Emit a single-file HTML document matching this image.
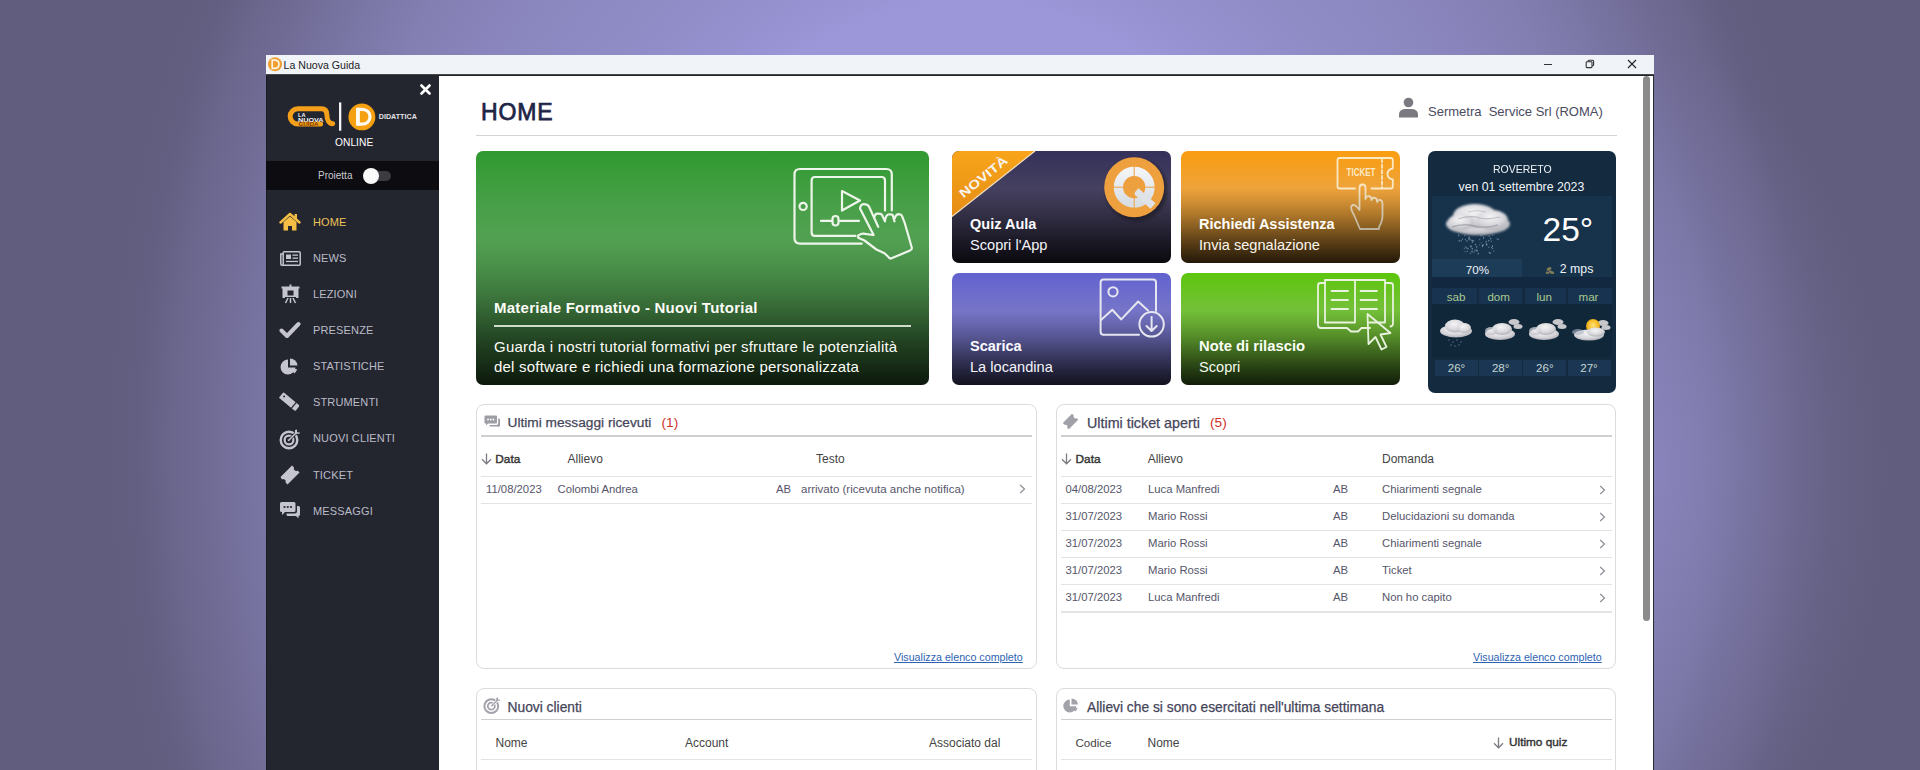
<!DOCTYPE html>
<html><head><meta charset="utf-8">
<style>
*{margin:0;padding:0;box-sizing:border-box}
html,body{width:1920px;height:770px;overflow:hidden}
body{position:relative;font-family:"Liberation Sans",sans-serif;
background:#615d7e;}
.bg{position:absolute;left:0;top:0;width:1920px;height:770px;
background:radial-gradient(ellipse 230px 420px at 1660px 470px,rgba(155,151,216,0.4) 0%,rgba(155,151,216,0.18) 50%,rgba(155,151,216,0) 100%),radial-gradient(ellipse 866px 1073px at 970px 450px,#9b97d8 0%,#9b97d8 41.7%,#9591cf 47.2%,#8f8bc5 55.1%,#8985bc 67.7%,#837fb2 74.8%,#7a76a5 81.1%,#75719d 85%,#6f6b94 88.2%,#6a668c 92.1%,#635f82 96.1%,#615d7e 100%);}
.a{position:absolute}
.win{position:absolute;left:266px;top:55px;width:1388px;height:715px;background:#fff}
.title{position:absolute;left:266px;top:55px;width:1388px;height:19px;background:#f0f3f8}
.tline{position:absolute;left:266px;top:74px;width:1388px;height:2px;background:linear-gradient(180deg,#58585c 0%,#141418 100%)}
.side{position:absolute;left:266px;top:75px;width:173px;height:695px;background:#23252f}
.main{position:absolute;left:439px;top:75px;width:1214px;height:695px;background:#fff}
.rb{position:absolute;left:1653px;top:75px;width:1px;height:695px;background:#2a2a33}
.lb{position:absolute;left:266px;top:75px;width:1px;height:695px;background:#1b1c24}
.menu{position:absolute;left:313px;font-size:11px;color:#babcc8;letter-spacing:0.15px;line-height:11px}
.card{position:absolute;border-radius:7px;overflow:hidden;color:#fff}
.t{position:absolute;line-height:1;white-space:nowrap}
.panel{position:absolute;border:1px solid #dcdcdc;border-radius:8px;background:#fff}
</style></head>
<body>
<div class="bg"></div>
<div class="win"></div>
<div class="title"></div>
<div class="side"></div>
<div class="lb"></div>
<div class="main"></div>
<div class="rb"></div>
<div class="tline"></div>

<!-- title bar -->
<svg class="a" style="left:267px;top:56px" width="17" height="17" viewBox="0 0 17 17"><circle cx="8" cy="8.3" r="7" fill="#f0a030"/><path d="M5.2 4.2 H7.5 Q12 4.2 12 8.3 Q12 12.4 7.5 12.4 H5.2Z" fill="none" stroke="#fdf3e0" stroke-width="1.7"/><path d="M7 6.3 L10 8.3 L7 10.3Z" fill="#f0a030"/></svg>
<div class="t" style="left:283.5px;top:60px;font-size:10.6px;color:#1c1c1c">La Nuova Guida</div>
<div class="a" style="left:1544px;top:63.5px;width:8px;height:1.2px;background:#333"></div>
<svg class="a" style="left:1585px;top:59px" width="10" height="10" viewBox="0 0 10 10"><rect x="1.2" y="2.8" width="5.8" height="5.8" rx="0.8" fill="none" stroke="#333" stroke-width="1.1"/><path d="M3 2.6 V2.2 Q3 1.2 4 1.2 H7.6 Q8.6 1.2 8.6 2.2 V5.8 Q8.6 6.8 7.6 6.8 H7.2" fill="none" stroke="#333" stroke-width="1.1"/></svg>
<svg class="a" style="left:1627px;top:59px" width="10" height="10" viewBox="0 0 10 10"><path d="M1 1 L9 9 M9 1 L1 9" stroke="#222" stroke-width="1.1"/></svg>

<!-- sidebar -->
<svg class="a" style="left:420px;top:84px" width="11" height="11" viewBox="0 0 11 11"><path d="M1.5 1.5L9.5 9.5M9.5 1.5L1.5 9.5" stroke="#fff" stroke-width="2.6" stroke-linecap="round"/></svg>
<svg class="a" style="left:286px;top:101px" width="134" height="32" viewBox="0 0 134 32">
 <path d="M34.6 23 H11.8 A7.65 7.65 0 0 1 11.8 7.7 H35.5 C39.5 7.7 40.9 10 40.9 14 C40.9 19 43 22.5 46.7 22.7" fill="none" stroke="#f5a01a" stroke-width="5" stroke-linecap="round" stroke-linejoin="round"/>
 <text x="12" y="16.3" font-family="Liberation Sans" font-weight="bold" font-size="5.6" fill="#f4f4f6">LA</text>
 <text x="12" y="20.6" font-family="Liberation Sans" font-weight="bold" font-size="5.6" fill="#f4f4f6" textLength="25.5" lengthAdjust="spacingAndGlyphs">NUOVA</text>
 <text x="12.5" y="25" font-family="Liberation Sans" font-weight="bold" font-size="4.6" fill="#7a3800" textLength="20" lengthAdjust="spacingAndGlyphs">GUIDA</text>
 <rect x="53" y="1.4" width="2.3" height="28.3" fill="#f4f4f6"/>
 <circle cx="75.9" cy="15.9" r="13.45" fill="#f5a010"/>
 <path d="M71.95 8.3 H75.5 C81 8.3 84 11.5 84 15.7 C84 20 81 23.1 75.5 23.1 H71.95 Z" fill="none" stroke="#fdfaf2" stroke-width="3.2" stroke-linejoin="round"/>
 <rect x="70.1" y="6.8" width="3.6" height="17.8" fill="#fdfaf2"/>
 <text x="92.8" y="17.9" font-family="Liberation Sans" font-weight="bold" font-size="7.6" fill="#e2e2e8" textLength="38" lengthAdjust="spacingAndGlyphs">DIDATTICA</text>
</svg>
<div class="t" style="left:335px;top:137.5px;font-size:10.2px;color:#fff;letter-spacing:0.05px">ONLINE</div>
<div class="a" style="left:266px;top:161px;width:173px;height:29px;background:#0c0c11"></div>
<div class="a" style="left:318px;top:171px;font-size:10px;line-height:10px;color:#c9c9cf">Proietta</div>
<div class="a" style="left:364px;top:171px;width:27px;height:9.5px;border-radius:5px;background:#3b3b40"></div>
<div class="a" style="left:363px;top:168px;width:16px;height:16px;border-radius:8px;background:#fafafa"></div>

<svg class="a" style="left:279px;top:212px" width="22" height="20" viewBox="0 0 22 20"><path d="M1.5 10.5 L11 2 L20.5 10.5" fill="none" stroke="#f5bf45" stroke-width="2.4" stroke-linecap="round" stroke-linejoin="round"/><path d="M15.5 2 h2.5 v5 l-2.5 -2z" fill="#f5bf45"/><path d="M4.5 10 L11 4.5 L17.5 10 V18.5 H13 V14 H9 V18.5 H4.5Z" fill="#f5bf45"/></svg>
<div class="menu" style="top:217px;color:#eec35a">HOME</div>

<svg class="a" style="left:280px;top:251px" width="21" height="15" viewBox="0 0 21 15"><rect x="3.2" y="0.8" width="17" height="13.4" rx="1" fill="none" stroke="#c4c5ce" stroke-width="1.5"/><path d="M3.2 3 H0.8 V13 Q0.8 14.2 2 14.2 H4" fill="none" stroke="#c4c5ce" stroke-width="1.5"/><rect x="6" y="3.5" width="5" height="4.5" fill="#c4c5ce"/><rect x="12.5" y="3.5" width="5.5" height="1.3" fill="#c4c5ce"/><rect x="12.5" y="6.5" width="5.5" height="1.3" fill="#c4c5ce"/><rect x="6" y="9.8" width="12" height="1.3" fill="#c4c5ce"/></svg>
<div class="menu" style="top:253px">NEWS</div>

<svg class="a" style="left:281px;top:284px" width="19" height="20" viewBox="0 0 19 20"><rect x="0.5" y="2.5" width="18" height="2" fill="#c4c5ce"/><rect x="8.5" y="0.5" width="2" height="3" fill="#c4c5ce"/><path d="M1.5 4 H17.5 V14 H1.5Z" fill="#c4c5ce"/><rect x="6.5" y="6.5" width="6" height="5" fill="#23252f"/><rect x="4" y="13" width="11" height="1.5" fill="#23252f"/><path d="M9.5 14 V19 M7 14 L4.5 19 M12 14 L14.5 19" stroke="#c4c5ce" stroke-width="1.5"/></svg>
<div class="menu" style="top:289px">LEZIONI</div>

<svg class="a" style="left:279px;top:321px" width="22" height="18" viewBox="0 0 22 18"><path d="M2.5 9.5 L8 15 L19.5 3" fill="none" stroke="#c4c5ce" stroke-width="4" stroke-linecap="round" stroke-linejoin="round"/></svg>
<div class="menu" style="top:325px">PRESENZE</div>

<svg class="a" style="left:280px;top:358px" width="19" height="18" viewBox="0 0 19 18"><path d="M8 1.5 A7.5 7.5 0 1 0 15.5 9.5 H8Z" fill="#c4c5ce"/><path d="M10 0.5 A7.5 7.5 0 0 1 17.5 7.5 H10Z" fill="#c4c5ce"/><path d="M10.2 11 H17 A7 7 0 0 1 14.5 15.5Z" fill="#c4c5ce"/></svg>
<div class="menu" style="top:361px">STATISTICHE</div>

<svg class="a" style="left:279px;top:392px" width="22" height="20" viewBox="0 0 22 20"><g transform="translate(10.3 9.7) rotate(39.5)"><path d="M-10.6 -2.6 Q-10.6 -3.6 -9.6 -3.6 H5.2 V3.6 H-9.6 Q-10.6 3.6 -10.6 2.6Z" fill="#c4c5ce"/><path d="M6.4 -3.6 H9.2 Q10.6 -3.6 10.6 -2.2 V2.2 Q10.6 3.6 9.2 3.6 H6.4Z" fill="#c4c5ce"/><circle cx="-7.3" cy="-0.8" r="1" fill="#23252f"/></g></svg>
<div class="menu" style="top:397px">STRUMENTI</div>

<svg class="a" style="left:279px;top:429px" width="22" height="21" viewBox="0 0 22 21"><circle cx="10" cy="11" r="8.3" fill="none" stroke="#c4c5ce" stroke-width="2.4"/><circle cx="10" cy="11" r="4.4" fill="none" stroke="#c4c5ce" stroke-width="2.2"/><circle cx="10" cy="11" r="1.3" fill="#c4c5ce"/><path d="M10 11 L18 3" stroke="#23252f" stroke-width="3"/><path d="M10 11 L18 3" stroke="#c4c5ce" stroke-width="1.6"/><path d="M16 1 L16 4.8 L20.5 4.8 L21 3.5 L18 3.3 L18 0.5Z" fill="#c4c5ce"/></svg>
<div class="menu" style="top:433px">NUOVI CLIENTI</div>

<svg class="a" style="left:279px;top:464px" width="22" height="22" viewBox="0 0 22 22"><path d="M13 1.5 L15 3.5 Q14 5.5 16 6.5 Q17.5 7.5 18.5 6.5 L20.5 8.5 L8.5 20.5 L6.5 18.5 Q7.5 16.5 5.5 15.5 Q4 14.5 3 15.5 L1.5 13Z" fill="#c4c5ce"/></svg>
<div class="menu" style="top:470px">TICKET</div>

<svg class="a" style="left:279px;top:501px" width="22" height="19" viewBox="0 0 22 19"><path d="M2.5 1 H15 Q16.5 1 16.5 2.5 V9.5 Q16.5 11 15 11 H6 L3 14 V11 H2.5 Q1 11 1 9.5 V2.5 Q1 1 2.5 1Z" fill="#c4c5ce"/><circle cx="5.5" cy="6" r="1.1" fill="#23252f"/><circle cx="8.8" cy="6" r="1.1" fill="#23252f"/><circle cx="12" cy="6" r="1.1" fill="#23252f"/><path d="M18 5 H19.5 Q21 5 21 6.5 V13.5 Q21 15 19.5 15 V17.5 L17 15 H9 Q7.5 15 7.5 13.5 V12.5 H15.5 Q18 12.5 18 10Z" fill="#c4c5ce"/></svg>
<div class="menu" style="top:506px">MESSAGGI</div>

<!-- header -->
<div class="t" style="left:481px;top:100.5px;font-size:23px;color:#1f2547;letter-spacing:0.9px;-webkit-text-stroke:0.75px #1f2547">HOME</div>
<div class="a" style="left:476px;top:135px;width:1141px;height:1px;background:#d4d4d4"></div>
<svg class="a" style="left:1398px;top:97px" width="22" height="21" viewBox="0 0 22 21"><circle cx="10.5" cy="5.5" r="4.8" fill="#7a7a80"/><path d="M1 20.5 V17.5 Q1 12.5 7 12 H14 Q20 12.5 20 17.5 V20.5Z" fill="#7a7a80"/></svg>
<div class="a" style="left:1428px;top:105px;font-size:13px;color:#4a4a60;line-height:13px">Sermetra&nbsp; Service Srl (ROMA)</div>

<!-- cards -->
<div class="card" style="left:476px;top:151px;width:453px;height:234px;background:linear-gradient(180deg,rgba(0,0,0,0) 0%,rgba(0,0,0,0) 38%,rgba(0,0,0,0.1) 49%,rgba(0,0,0,0.25) 61%,rgba(0,0,0,0.58) 81%,rgba(0,0,0,0.85) 100%),linear-gradient(180deg,#2f992f 0%,#47a047 22%,#52a052 38%)">
 <svg class="a" style="left:309px;top:9px" width="140" height="105" viewBox="0 0 140 105" fill="none" stroke="#eef5ea" stroke-width="2.2" stroke-linecap="round" stroke-linejoin="round">
  <path d="M76.8 83.6 H15 Q9.5 83.6 9.5 78.1 V14.5 Q9.5 9 15 9 H101.3 Q106.8 9 106.8 14.5 V50.5"/>
  <path d="M70.5 75.9 H30 Q26.6 75.9 26.6 72.5 V20.4 Q26.6 17 30 17 H96.6 Q100 17 100 20.4 V50.5"/>
  <circle cx="18.1" cy="46.4" r="3.6"/>
  <path d="M57 31 L75 40.5 L57 50.5Z"/>
  <path d="M36 60.9 H46.5 M55 60.9 H74"/>
  <rect x="47.5" y="56" width="6" height="9.5" rx="3"/>
  <path d="M88.6 75 L75 48.6 Q75.5 44.5 78.6 44.1 Q82.5 44 84.1 46.8 L93.2 66.8 M89.5 56.8 Q90 53.8 92.3 53.6 Q95.8 53.5 96.8 54.5 L100 61.4 M100 60.5 Q101 55 103.2 54.5 Q106.5 54 107.7 55 L109.5 61.4 M109.5 58.6 Q111 54.3 113.2 54.1 Q116 54.2 116.8 55.5 L119.5 62.3 L124 77.7 L126.8 87.7 Q127 90 125 90.5 L105.9 98.6 Q104 98.5 103.2 96.8 L99.5 93.2 L91.4 89.5 L79.5 80.5 L73.2 77.7 Q72.5 75.5 74.1 75 Q76 73.5 78.6 73.6 L87.7 75"/>
 </svg>
 <div class="a" style="left:18px;top:149px;font-size:15px;font-weight:bold;line-height:15px;letter-spacing:0.25px;color:#fdfdf8">Materiale Formativo - Nuovi Tutorial</div>
 <div class="a" style="left:18px;top:174px;width:417px;height:1.6px;background:#cfdccb"></div>
 <div class="a" style="left:18px;top:186px;font-size:15px;line-height:20.4px;letter-spacing:0.22px;color:#fdfdf8">Guarda i nostri tutorial formativi per sfruttare le potenzialità<br>del software e richiedi una formazione personalizzata</div>
</div>

<div class="card" style="left:952px;top:151px;width:219px;height:112px;background:linear-gradient(180deg,rgba(0,0,0,0) 0%,rgba(0,0,0,0) 33%,rgba(0,0,0,0.12) 45%,rgba(0,0,0,0.27) 57%,rgba(0,0,0,0.6) 80%,rgba(0,0,0,0.85) 100%),linear-gradient(180deg,#33305a 0%,#45405f 33%)">
 <svg class="a" style="left:0;top:0" width="219" height="112"><defs><linearGradient id="rib" x1="0" y1="0" x2="0" y2="1"><stop offset="0" stop-color="#f9a51a"/><stop offset="1" stop-color="#e48c16"/></linearGradient></defs><path d="M0 0 H83 L0 65.5Z" fill="url(#rib)"/><path d="M83 0 L0 65.5" stroke="#f3e2c2" stroke-width="1.2"/>
 <text x="0" y="0" transform="translate(11.5 47.5) rotate(-38.8)" font-family="Liberation Sans" font-weight="bold" font-size="12.5" fill="#f7f3ee" textLength="58" lengthAdjust="spacingAndGlyphs">NOVITÀ</text>
 <defs><filter id="qsh" x="-30%" y="-30%" width="160%" height="160%"><feGaussianBlur stdDeviation="1.6"/></filter><linearGradient id="qw" x1="0" y1="0" x2="0" y2="1"><stop offset="0" stop-color="#f2f4f6"/><stop offset="1" stop-color="#d9dee3"/></linearGradient></defs>
 <circle cx="184.5" cy="39" r="31" fill="#15121f" opacity="0.55" filter="url(#qsh)"/>
 <circle cx="182.2" cy="36.2" r="30" fill="#eea03e"/>
 <circle cx="182.2" cy="36.2" r="15.8" fill="none" stroke="url(#qw)" stroke-width="9.3"/>
 <path d="M186.5 37.2 L203.5 52.2 L198.5 57.8 L181.5 42.8Z" fill="#dfe3e8"/>
 <path d="M182.2 15.5 V57 M161.5 36.2 H203" stroke="#eda040" stroke-width="1"/>
 </svg>
 <div class="a" style="left:18px;top:66px;font-size:14.5px;font-weight:bold;line-height:15px;color:#fbfbff">Quiz Aula</div>
 <div class="a" style="left:18px;top:87px;font-size:14.6px;line-height:15px;color:#f4f4fa">Scopri l'App</div>
</div>

<div class="card" style="left:1181px;top:151px;width:219px;height:112px;background:linear-gradient(180deg,rgba(0,0,0,0) 0%,rgba(0,0,0,0) 33%,rgba(0,0,0,0.12) 45%,rgba(0,0,0,0.27) 57%,rgba(0,0,0,0.6) 80%,rgba(0,0,0,0.85) 100%),linear-gradient(180deg,#fa9d10 0%,#eea33a 33%)">
 <svg class="a" style="left:149px;top:2px" width="70" height="80" viewBox="0 0 70 80" fill="none" stroke="#fbe8c4" stroke-width="1.8" stroke-linecap="round" stroke-linejoin="round"><defs><linearGradient id="hg" gradientUnits="userSpaceOnUse" x1="0" y1="30" x2="0" y2="78"><stop offset="0" stop-color="#fbe8c4"/><stop offset="1" stop-color="#b9ae9c"/></linearGradient></defs>
  <path d="M25 35.5 H9.5 Q7.5 35.5 7.5 33.5 V7 Q7.5 5 9.5 5 H60.8 Q62.8 5 62.8 7 V15.5 Q57.5 16.5 57.5 21 Q57.5 25.5 62.8 26.5 V33.5 Q62.8 35.5 60.8 35.5 H41.5"/>
  <path d="M52 6 V35" stroke-dasharray="3.2 2.4"/>
  <path stroke="url(#hg)" d="M30 76 L24 62 Q20 55 21.5 53 Q23 51 26 53 L29.5 57 V35 Q29.5 31.5 32.5 31.5 Q35.5 31.5 35.5 35 V46 Q36 43 39 43.2 Q41.5 43.5 41.5 47 Q42 44.5 44.8 44.8 Q47.2 45.2 47.2 49 Q48 46.5 50.5 47 Q52.5 47.5 52.5 51 V63 Q52.5 68 49 74 V76Z"/>
  <text x="16.5" y="23.3" font-family="Liberation Sans" font-weight="bold" font-size="10" stroke="none" fill="#fbe8c4" textLength="29" lengthAdjust="spacingAndGlyphs">TICKET</text>
 </svg>
 <div class="a" style="left:18px;top:66px;font-size:14.5px;font-weight:bold;line-height:15px;color:#fffdf6">Richiedi Assistenza</div>
 <div class="a" style="left:18px;top:87px;font-size:14.6px;line-height:15px;color:#fbf6ee">Invia segnalazione</div>
</div>

<div class="card" style="left:952px;top:273px;width:219px;height:112px;background:linear-gradient(180deg,rgba(0,0,0,0) 0%,rgba(0,0,0,0) 33%,rgba(0,0,0,0.12) 45%,rgba(0,0,0,0.27) 57%,rgba(0,0,0,0.6) 80%,rgba(0,0,0,0.85) 100%),linear-gradient(180deg,#6262cf 0%,#7675c9 33%)">
 <svg class="a" style="left:140px;top:0px" width="79" height="80" viewBox="0 0 79 80" fill="none" stroke="#e6e6f0" stroke-width="2" stroke-linecap="round" stroke-linejoin="round">
  <path d="M47 61.8 H11.6 Q8.6 61.8 8.6 58.8 V9.6 Q8.6 6.6 11.6 6.6 H61 Q64 6.6 64 9.6 V38"/>
  <circle cx="21" cy="18.8" r="4.6"/>
  <path d="M9 47 L20.3 36.7 L29.2 46.4 L46.2 28.5 L56 37.5"/>
  <circle cx="59.6" cy="51.3" r="12.2"/>
  <path d="M59.6 44 V57.5 M54.5 53 L59.6 58 L64.7 53"/>
 </svg>
 <div class="a" style="left:18px;top:66px;font-size:14.5px;font-weight:bold;line-height:15px;color:#fbfbff">Scarica</div>
 <div class="a" style="left:18px;top:87px;font-size:14.6px;line-height:15px;color:#f4f4fa">La locandina</div>
</div>

<div class="card" style="left:1181px;top:273px;width:219px;height:112px;background:linear-gradient(180deg,rgba(0,0,0,0) 0%,rgba(0,0,0,0) 33%,rgba(0,0,0,0.12) 45%,rgba(0,0,0,0.27) 57%,rgba(0,0,0,0.6) 80%,rgba(0,0,0,0.85) 100%),linear-gradient(180deg,#5ec60e 0%,#74c038 33%)">
 <svg class="a" style="left:130px;top:2px" width="89" height="80" viewBox="0 0 89 80" fill="none" stroke="#e8f2de" stroke-width="1.8" stroke-linecap="round" stroke-linejoin="round">
  <path d="M14 8 H9.5 Q7 8 7 10.5 V50 Q7 53 10 53 H36 L40 56.5 H47 L50.5 53 H59"/>
  <path d="M75 8 H79.5 Q82 8 82 10.5 V48.5 Q82 51 79.5 51.5"/>
  <path d="M14 5 H44 V47.5 H14Z"/>
  <path d="M44 5 H74 V47.5 H58"/>
  <path d="M20.5 16 H37 M20.5 25 H37 M20.5 34 H37 M49.5 16 H66 M49.5 25 H66 M49.5 34 H66"/>
  <path d="M56.5 39 L79.5 58 L69.5 59.5 L75.5 72 L70.5 74.5 L64.5 62 L57.5 69Z"/>
 </svg>
 <div class="a" style="left:18px;top:66px;font-size:14.8px;font-weight:bold;line-height:15px;color:#fbfff6">Note di rilascio</div>
 <div class="a" style="left:18px;top:87px;font-size:14.6px;line-height:15px;color:#f4faee">Scopri</div>
</div>

<div class="card" style="left:1428px;top:151px;width:188px;height:242px;background:#132a3f">
 <div class="a" style="left:4px;top:45px;width:180px;height:82px;background:#17334c"></div>
 <div class="a" style="left:4px;top:108px;width:90px;height:19px;background:#1d3c57"></div>
 <div class="a" style="left:4px;top:126px;width:180px;height:10px;background:#112840"></div>
 <div class="a" style="left:4px;top:136.5px;width:45px;height:16.5px;background:#173350"></div>
 <div class="a" style="left:51px;top:136.5px;width:43px;height:16.5px;background:#173350"></div>
 <div class="a" style="left:97px;top:136.5px;width:41px;height:16.5px;background:#173350"></div>
 <div class="a" style="left:140px;top:136.5px;width:44px;height:16.5px;background:#173350"></div>
 <div class="a" style="left:4px;top:153px;width:180px;height:53px;background:#102639"></div>
 <div class="a" style="left:6.5px;top:209px;width:43px;height:16px;background:#1b3652"></div>
 <div class="a" style="left:51px;top:209px;width:43px;height:16px;background:#1b3652"></div>
 <div class="a" style="left:95px;top:209px;width:43px;height:16px;background:#1b3652"></div>
 <div class="a" style="left:139.5px;top:209px;width:43px;height:16px;background:#1b3652"></div>
 <svg class="a" style="left:0;top:0" width="188" height="242" viewBox="0 0 188 242">
  <defs>
   <filter id="bl" x="-20%" y="-20%" width="140%" height="140%"><feGaussianBlur stdDeviation="1.1"/></filter>
   <filter id="bl2" x="-20%" y="-20%" width="140%" height="140%"><feGaussianBlur stdDeviation="0.6"/></filter>
   <radialGradient id="cg" cx="45%" cy="35%" r="70%"><stop offset="0" stop-color="#f4f4f6"/><stop offset="0.6" stop-color="#d8d8dc"/><stop offset="1" stop-color="#a8a8b0"/></radialGradient>
   <radialGradient id="sun" cx="50%" cy="45%" r="55%"><stop offset="0" stop-color="#ffe27a"/><stop offset="0.7" stop-color="#f5b922"/><stop offset="1" stop-color="#d99010"/></radialGradient>
  </defs>
  <g filter="url(#bl)">
   <ellipse cx="50" cy="73" rx="32" ry="11" fill="url(#cg)"/>
   <ellipse cx="47" cy="65" rx="22" ry="12" fill="url(#cg)"/>
   <ellipse cx="64" cy="69" rx="16" ry="10" fill="url(#cg)"/>
   <ellipse cx="33" cy="71" rx="13" ry="8" fill="url(#cg)"/>
  </g>
  <g filter="url(#bl2)" opacity="0.55">
   <path d="M24 76 Q36 72 46 75 Q56 78 70 74" stroke="#8e8e98" stroke-width="1.6" fill="none"/>
   <path d="M30 68 Q42 64 52 67 Q60 69 72 66" stroke="#9a9aa4" stroke-width="1.2" fill="none"/>
   <path d="M40 61 Q50 58 58 61" stroke="#a8a8b0" stroke-width="1" fill="none"/>
  </g>
  <g fill="#9ab8d2" opacity="0.75"><ellipse cx="51.8" cy="88.5" rx="0.45" ry="0.73"/><ellipse cx="54.5" cy="95.5" rx="0.38" ry="0.61"/><ellipse cx="64.8" cy="84.3" rx="0.42" ry="0.69"/><ellipse cx="70.3" cy="88.5" rx="0.47" ry="0.77"/><ellipse cx="49.2" cy="99.9" rx="0.51" ry="0.83"/><ellipse cx="55.7" cy="86.9" rx="0.57" ry="0.92"/><ellipse cx="58.9" cy="93.9" rx="0.52" ry="0.85"/><ellipse cx="61.1" cy="85.2" rx="0.50" ry="0.82"/><ellipse cx="31.2" cy="89.7" rx="0.57" ry="0.92"/><ellipse cx="58.3" cy="93.0" rx="0.57" ry="0.93"/><ellipse cx="64.5" cy="97.6" rx="0.45" ry="0.74"/><ellipse cx="48.2" cy="99.2" rx="0.58" ry="0.95"/><ellipse cx="37.0" cy="100.7" rx="0.39" ry="0.64"/><ellipse cx="69.1" cy="88.1" rx="0.46" ry="0.76"/><ellipse cx="42.9" cy="95.9" rx="0.48" ry="0.78"/><ellipse cx="44.2" cy="91.3" rx="0.50" ry="0.81"/><ellipse cx="64.6" cy="95.1" rx="0.52" ry="0.85"/><ellipse cx="61.3" cy="101.6" rx="0.60" ry="0.97"/><ellipse cx="38.2" cy="96.8" rx="0.57" ry="0.92"/><ellipse cx="62.6" cy="102.3" rx="0.50" ry="0.81"/><ellipse cx="40.0" cy="97.6" rx="0.56" ry="0.91"/><ellipse cx="42.2" cy="94.9" rx="0.38" ry="0.61"/><ellipse cx="66.0" cy="100.2" rx="0.38" ry="0.62"/><ellipse cx="47.0" cy="99.2" rx="0.40" ry="0.64"/><ellipse cx="60.8" cy="89.6" rx="0.57" ry="0.93"/><ellipse cx="55.0" cy="84.8" rx="0.37" ry="0.60"/><ellipse cx="44.2" cy="97.7" rx="0.57" ry="0.93"/><ellipse cx="50.2" cy="102.6" rx="0.60" ry="0.97"/><ellipse cx="33.1" cy="89.9" rx="0.50" ry="0.82"/><ellipse cx="36.8" cy="84.6" rx="0.46" ry="0.74"/><ellipse cx="37.7" cy="95.6" rx="0.37" ry="0.60"/><ellipse cx="44.0" cy="100.5" rx="0.59" ry="0.96"/><ellipse cx="46.1" cy="101.0" rx="0.47" ry="0.76"/><ellipse cx="55.3" cy="93.9" rx="0.50" ry="0.82"/><ellipse cx="54.4" cy="94.6" rx="0.59" ry="0.95"/><ellipse cx="47.4" cy="93.6" rx="0.53" ry="0.87"/><ellipse cx="41.9" cy="88.5" rx="0.59" ry="0.97"/><ellipse cx="51.8" cy="93.9" rx="0.36" ry="0.59"/><ellipse cx="53.1" cy="91.9" rx="0.36" ry="0.59"/><ellipse cx="54.7" cy="95.7" rx="0.37" ry="0.61"/><ellipse cx="48.8" cy="95.9" rx="0.52" ry="0.85"/><ellipse cx="58.1" cy="90.7" rx="0.54" ry="0.87"/><ellipse cx="30.8" cy="84.4" rx="0.52" ry="0.85"/><ellipse cx="42.2" cy="102.3" rx="0.47" ry="0.76"/><ellipse cx="43.5" cy="95.3" rx="0.45" ry="0.73"/><ellipse cx="44.8" cy="89.9" rx="0.50" ry="0.82"/><ellipse cx="45.1" cy="89.7" rx="0.55" ry="0.89"/><ellipse cx="53.0" cy="84.5" rx="0.54" ry="0.87"/><ellipse cx="38.9" cy="89.9" rx="0.55" ry="0.90"/><ellipse cx="37.2" cy="88.5" rx="0.46" ry="0.75"/><ellipse cx="36.2" cy="97.3" rx="0.44" ry="0.71"/><ellipse cx="63.2" cy="90.3" rx="0.47" ry="0.76"/><ellipse cx="39.2" cy="100.3" rx="0.44" ry="0.72"/><ellipse cx="63.6" cy="96.4" rx="0.47" ry="0.76"/><ellipse cx="34.5" cy="88.3" rx="0.49" ry="0.79"/><ellipse cx="62.7" cy="87.6" rx="0.56" ry="0.91"/><ellipse cx="40.8" cy="87.5" rx="0.55" ry="0.90"/><ellipse cx="60.9" cy="96.2" rx="0.44" ry="0.72"/><ellipse cx="41.2" cy="86.5" rx="0.55" ry="0.89"/><ellipse cx="43.8" cy="89.2" rx="0.46" ry="0.75"/></g>
  <g filter="url(#bl2)">
   <ellipse cx="28" cy="180" rx="16" ry="6.5" fill="url(#cg)"/>
   <ellipse cx="27" cy="175" rx="10" ry="6.5" fill="url(#cg)"/>
   <ellipse cx="36" cy="177" rx="7" ry="5" fill="url(#cg)"/>
  </g>
  <g fill="#7f9fba" opacity="0.7"><circle cx="21" cy="189" r="0.7"/><circle cx="25" cy="191" r="0.7"/><circle cx="29" cy="189" r="0.7"/><circle cx="33" cy="191" r="0.7"/><circle cx="23" cy="194" r="0.7"/><circle cx="27" cy="195" r="0.7"/><circle cx="31" cy="194" r="0.7"/></g>
  <g filter="url(#bl2)">
   <ellipse cx="86" cy="171" rx="5.5" ry="3" fill="#c8c8cc"/><ellipse cx="90" cy="175.5" rx="4.5" ry="2.5" fill="#c8c8cc"/>
   <ellipse cx="72" cy="183" rx="15" ry="6" fill="url(#cg)"/>
   <ellipse cx="74" cy="178" rx="10" ry="6" fill="url(#cg)"/>
   <ellipse cx="63" cy="180" rx="6" ry="4" fill="url(#cg)" opacity="0.7"/>
  </g>
  <g filter="url(#bl2)">
   <ellipse cx="130" cy="171" rx="5.5" ry="3" fill="#c8c8cc"/><ellipse cx="134" cy="175.5" rx="4.5" ry="2.5" fill="#c8c8cc"/>
   <ellipse cx="116" cy="183" rx="15" ry="6" fill="url(#cg)"/>
   <ellipse cx="118" cy="178" rx="10" ry="6" fill="url(#cg)"/>
   <ellipse cx="107" cy="180" rx="6" ry="4" fill="url(#cg)" opacity="0.7"/>
  </g>
  <g filter="url(#bl2)">
   <ellipse cx="175" cy="172" rx="5.5" ry="3" fill="#c8c8cc"/><ellipse cx="178" cy="176.5" rx="4.5" ry="2.5" fill="#c8c8cc"/>
   <circle cx="165" cy="175" r="7" fill="url(#sun)"/>
   <ellipse cx="161" cy="184" rx="15" ry="5.5" fill="url(#cg)"/>
   <ellipse cx="168" cy="181" rx="9" ry="4.5" fill="url(#cg)"/>
   <ellipse cx="150" cy="181" rx="6" ry="3" fill="#b0b8c8" opacity="0.6"/>
  </g>
  <g fill="#7f7b56"><ellipse cx="121" cy="118" rx="2.6" ry="1.6" transform="rotate(-25 121 118)"/><ellipse cx="123.5" cy="121.3" rx="2.8" ry="1.5" transform="rotate(20 123.5 121.3)"/><ellipse cx="119.5" cy="121.8" rx="1.8" ry="1.2"/></g>
 </svg>
 <div class="t" style="left:64.5px;top:13.1px;font-size:11.8px;color:#f2f5f8;transform:scaleX(0.89);transform-origin:0 0">ROVERETO</div>
 <div class="t" style="left:30.5px;top:30.3px;font-size:12.3px;color:#f2f5f8">ven 01 settembre 2023</div>
 <div class="t" style="left:114.5px;top:62.3px;font-size:33.5px;color:#fdfdfd">25°</div>
 <div class="t" style="left:37.8px;top:112.8px;font-size:11.6px;color:#eef3f8">70%</div>
 <div class="t" style="left:131.8px;top:112.4px;font-size:12.3px;color:#eef3f8">2 mps</div>
 <div class="t" style="left:18.8px;top:139.9px;font-size:11.6px;color:#a9c98e">sab</div>
 <div class="t" style="left:59.4px;top:139.9px;font-size:11.6px;color:#a9c98e">dom</div>
 <div class="t" style="left:108.5px;top:139.9px;font-size:11.6px;color:#a9c98e">lun</div>
 <div class="t" style="left:150.5px;top:139.9px;font-size:11.6px;color:#a9c98e">mar</div>
 <div class="t" style="left:19.7px;top:211.2px;font-size:11.6px;color:#c5d8d0">26°</div>
 <div class="t" style="left:63.9px;top:211.2px;font-size:11.6px;color:#c5d8d0">28°</div>
 <div class="t" style="left:108px;top:211.2px;font-size:11.6px;color:#c5d8d0">26°</div>
 <div class="t" style="left:152.2px;top:211.2px;font-size:11.6px;color:#c5d8d0">27°</div>
</div>

<!-- panels -->
<div class="panel" style="left:476px;top:404px;width:561px;height:265px"></div>
<div class="panel" style="left:1056px;top:404px;width:560px;height:265px"></div>
<div class="panel" style="left:476px;top:688px;width:561px;height:200px"></div>
<div class="panel" style="left:1056px;top:688px;width:560px;height:200px"></div>
<svg class="a" style="left:484px;top:415px" width="17" height="13" viewBox="0 0 17 13"><path d="M1.5 0.5 H12 Q13 0.5 13 1.5 V7.5 Q13 8.5 12 8.5 H4 L2 10.5 V8.5 H1.5 Q0.5 8.5 0.5 7.5 V1.5 Q0.5 0.5 1.5 0.5Z" fill="#9d9da6"/><circle cx="4" cy="4.5" r="0.9" fill="#fff"/><circle cx="6.7" cy="4.5" r="0.9" fill="#fff"/><circle cx="9.4" cy="4.5" r="0.9" fill="#fff"/><path d="M14.2 3.5 H15 Q16 3.5 16 4.5 V10.5 Q16 11.5 15 11.5 V12.5 L14 11.5 H6.5 Q5.5 11.5 5.5 10.5 V10 H12.5 Q14.2 10 14.2 8.3Z" fill="#9d9da6"/></svg>
<div class="t" style="left:507.5px;top:416.20px;font-size:13.7px;color:#45455a;font-weight:400;-webkit-text-stroke:0.25px #45455a;">Ultimi messaggi ricevuti</div>
<div class="t" style="left:661.5px;top:416.20px;font-size:13.7px;color:#d0312d;font-weight:400;">(1)</div>
<div class="a" style="left:481px;top:435px;width:551px;height:1.5px;background:#cfcfcf"></div>
<svg class="a" style="left:481px;top:453px" width="11" height="12" viewBox="0 0 11 12"><path d="M5.5 0.5 V10.8 M1 6.3 L5.5 10.8 L10 6.3" fill="none" stroke="#7a7a80" stroke-width="1.3"/></svg>
<div class="t" style="left:495.3px;top:453.82px;font-size:11.8px;color:#333;font-weight:400;-webkit-text-stroke:0.4px #333;">Data</div>
<div class="t" style="left:567.5px;top:453.14px;font-size:12px;color:#444;font-weight:400;">Allievo</div>
<div class="t" style="left:816px;top:453.14px;font-size:12px;color:#444;font-weight:400;">Testo</div>
<div class="a" style="left:481px;top:475.5px;width:551px;height:1.5px;background:#e3e3e3"></div>
<div class="t" style="left:486px;top:484.03px;font-size:11.3px;color:#56566a;font-weight:400;">11/08/2023</div>
<div class="t" style="left:557.5px;top:484.03px;font-size:11.3px;color:#56566a;font-weight:400;">Colombi Andrea</div>
<div class="t" style="left:776px;top:484.03px;font-size:11.3px;color:#56566a;font-weight:400;">AB</div>
<div class="t" style="left:801px;top:483.87px;font-size:11.5px;color:#56566a;font-weight:400;">arrivato (ricevuta anche notifica)</div>
<svg class="a" style="left:1019px;top:484px" width="7" height="10" viewBox="0 0 7 10"><path d="M1.2 1 L5.5 5 L1.2 9" fill="none" stroke="#8c8c96" stroke-width="1.2"/></svg>
<div class="a" style="left:481px;top:502.5px;width:551px;height:1.5px;background:#e3e3e3"></div>
<div class="t" style="left:894px;top:652.3px;font-size:10.7px;color:#2e62b2;font-weight:400;text-decoration:underline">Visualizza elenco completo</div>
<svg class="a" style="left:1062px;top:413px" width="17" height="17" viewBox="0 0 17 17"><path d="M10 0.8 L11.8 2.6 Q11 4.3 12.6 5.2 Q13.8 5.9 14.6 5 L16.2 6.8 L6.8 16.2 L5 14.6 Q5.9 13.5 5.2 12.6 Q4.3 11.3 2.6 11.8 L0.8 10Z" fill="#a0a0a8"/></svg>
<div class="t" style="left:1087px;top:415.70px;font-size:14.3px;color:#45455a;font-weight:400;-webkit-text-stroke:0.25px #45455a;">Ultimi ticket aperti</div>
<div class="t" style="left:1210px;top:416.20px;font-size:13.7px;color:#d0312d;font-weight:400;">(5)</div>
<div class="a" style="left:1061px;top:435px;width:551px;height:1.5px;background:#cfcfcf"></div>
<svg class="a" style="left:1061px;top:453px" width="11" height="12" viewBox="0 0 11 12"><path d="M5.5 0.5 V10.8 M1 6.3 L5.5 10.8 L10 6.3" fill="none" stroke="#7a7a80" stroke-width="1.3"/></svg>
<div class="t" style="left:1075.6px;top:453.82px;font-size:11.8px;color:#333;font-weight:400;-webkit-text-stroke:0.4px #333;">Data</div>
<div class="t" style="left:1147.7px;top:453.14px;font-size:12px;color:#444;font-weight:400;">Allievo</div>
<div class="t" style="left:1382px;top:453.14px;font-size:12px;color:#444;font-weight:400;">Domanda</div>
<div class="a" style="left:1061px;top:475.5px;width:551px;height:1.5px;background:#e3e3e3"></div>
<div class="t" style="left:1065.5px;top:484.33px;font-size:11.3px;color:#56566a;font-weight:400;">04/08/2023</div>
<div class="t" style="left:1148px;top:484.33px;font-size:11.3px;color:#56566a;font-weight:400;">Luca Manfredi</div>
<div class="t" style="left:1333px;top:484.33px;font-size:11.3px;color:#56566a;font-weight:400;">AB</div>
<div class="t" style="left:1382px;top:484.33px;font-size:11.3px;color:#56566a;font-weight:400;">Chiarimenti segnale</div>
<svg class="a" style="left:1599px;top:484.5px" width="7" height="10" viewBox="0 0 7 10"><path d="M1.2 1 L5.5 5 L1.2 9" fill="none" stroke="#8c8c96" stroke-width="1.2"/></svg>
<div class="a" style="left:1061px;top:502.5px;width:551px;height:1.5px;background:#e3e3e3"></div>
<div class="t" style="left:1065.5px;top:511.33px;font-size:11.3px;color:#56566a;font-weight:400;">31/07/2023</div>
<div class="t" style="left:1148px;top:511.33px;font-size:11.3px;color:#56566a;font-weight:400;">Mario Rossi</div>
<div class="t" style="left:1333px;top:511.33px;font-size:11.3px;color:#56566a;font-weight:400;">AB</div>
<div class="t" style="left:1382px;top:511.33px;font-size:11.3px;color:#56566a;font-weight:400;">Delucidazioni su domanda</div>
<svg class="a" style="left:1599px;top:511.5px" width="7" height="10" viewBox="0 0 7 10"><path d="M1.2 1 L5.5 5 L1.2 9" fill="none" stroke="#8c8c96" stroke-width="1.2"/></svg>
<div class="a" style="left:1061px;top:529.5px;width:551px;height:1.5px;background:#e3e3e3"></div>
<div class="t" style="left:1065.5px;top:538.33px;font-size:11.3px;color:#56566a;font-weight:400;">31/07/2023</div>
<div class="t" style="left:1148px;top:538.33px;font-size:11.3px;color:#56566a;font-weight:400;">Mario Rossi</div>
<div class="t" style="left:1333px;top:538.33px;font-size:11.3px;color:#56566a;font-weight:400;">AB</div>
<div class="t" style="left:1382px;top:538.33px;font-size:11.3px;color:#56566a;font-weight:400;">Chiarimenti segnale</div>
<svg class="a" style="left:1599px;top:538.5px" width="7" height="10" viewBox="0 0 7 10"><path d="M1.2 1 L5.5 5 L1.2 9" fill="none" stroke="#8c8c96" stroke-width="1.2"/></svg>
<div class="a" style="left:1061px;top:556.5px;width:551px;height:1.5px;background:#e3e3e3"></div>
<div class="t" style="left:1065.5px;top:565.33px;font-size:11.3px;color:#56566a;font-weight:400;">31/07/2023</div>
<div class="t" style="left:1148px;top:565.33px;font-size:11.3px;color:#56566a;font-weight:400;">Mario Rossi</div>
<div class="t" style="left:1333px;top:565.33px;font-size:11.3px;color:#56566a;font-weight:400;">AB</div>
<div class="t" style="left:1382px;top:565.33px;font-size:11.3px;color:#56566a;font-weight:400;">Ticket</div>
<svg class="a" style="left:1599px;top:565.5px" width="7" height="10" viewBox="0 0 7 10"><path d="M1.2 1 L5.5 5 L1.2 9" fill="none" stroke="#8c8c96" stroke-width="1.2"/></svg>
<div class="a" style="left:1061px;top:583.5px;width:551px;height:1.5px;background:#e3e3e3"></div>
<div class="t" style="left:1065.5px;top:592.33px;font-size:11.3px;color:#56566a;font-weight:400;">31/07/2023</div>
<div class="t" style="left:1148px;top:592.33px;font-size:11.3px;color:#56566a;font-weight:400;">Luca Manfredi</div>
<div class="t" style="left:1333px;top:592.33px;font-size:11.3px;color:#56566a;font-weight:400;">AB</div>
<div class="t" style="left:1382px;top:592.33px;font-size:11.3px;color:#56566a;font-weight:400;">Non ho capito</div>
<svg class="a" style="left:1599px;top:592.5px" width="7" height="10" viewBox="0 0 7 10"><path d="M1.2 1 L5.5 5 L1.2 9" fill="none" stroke="#8c8c96" stroke-width="1.2"/></svg>
<div class="a" style="left:1061px;top:611px;width:551px;height:1.5px;background:#e3e3e3"></div>
<div class="t" style="left:1473px;top:652.3px;font-size:10.7px;color:#2e62b2;font-weight:400;text-decoration:underline">Visualizza elenco completo</div>
<svg class="a" style="left:483px;top:697px" width="18" height="18" viewBox="0 0 18 18"><circle cx="8.3" cy="9.2" r="6.9" fill="none" stroke="#a2a2aa" stroke-width="2"/><circle cx="8.3" cy="9.2" r="3.5" fill="none" stroke="#a2a2aa" stroke-width="1.8"/><path d="M8.3 9.2 L15 2.5" stroke="#fff" stroke-width="2.5"/><path d="M8.3 9.2 L15 2.5" stroke="#a2a2aa" stroke-width="1.3"/><path d="M13.3 0.8 V3.8 H16.8 L17.3 2.8 L15 2.5 V0.5Z" fill="#a2a2aa"/></svg>
<div class="t" style="left:507.5px;top:701.20px;font-size:13.8px;color:#45455a;font-weight:400;-webkit-text-stroke:0.25px #45455a;">Nuovi clienti</div>
<div class="a" style="left:481px;top:718.5px;width:551px;height:1.5px;background:#cfcfcf"></div>
<div class="t" style="left:495.5px;top:736.84px;font-size:12px;color:#444;font-weight:400;">Nome</div>
<div class="t" style="left:685px;top:736.84px;font-size:12px;color:#444;font-weight:400;">Account</div>
<div class="t" style="left:929px;top:736.84px;font-size:12px;color:#444;font-weight:400;">Associato dal</div>
<div class="a" style="left:481px;top:758.5px;width:551px;height:1.5px;background:#e3e3e3"></div>
<svg class="a" style="left:1063px;top:698px" width="16" height="16" viewBox="0 0 16 16"><path d="M6.8 1.5 A6.5 6.5 0 1 0 13.3 8.2 H6.8Z" fill="#a2a2aa"/><path d="M8.5 0.5 A6.5 6.5 0 0 1 15 6.6 H8.5Z" fill="#a2a2aa"/><path d="M8.8 9.8 H14.5 A6 6 0 0 1 12.3 13.5Z" fill="#a2a2aa"/></svg>
<div class="t" style="left:1087px;top:701.10px;font-size:13.8px;color:#45455a;font-weight:400;-webkit-text-stroke:0.25px #45455a;">Allievi che si sono esercitati nell'ultima settimana</div>
<div class="a" style="left:1061px;top:718.5px;width:551px;height:1.5px;background:#cfcfcf"></div>
<div class="t" style="left:1075.4px;top:737.18px;font-size:11.6px;color:#444;font-weight:400;">Codice</div>
<div class="t" style="left:1147.5px;top:736.84px;font-size:12px;color:#444;font-weight:400;">Nome</div>
<svg class="a" style="left:1493px;top:737px" width="11" height="12" viewBox="0 0 11 12"><path d="M5.5 0.5 V10.8 M1 6.3 L5.5 10.8 L10 6.3" fill="none" stroke="#7a7a80" stroke-width="1.3"/></svg>
<div class="t" style="left:1509px;top:737.43px;font-size:11.8px;color:#333;font-weight:400;-webkit-text-stroke:0.4px #333;">Ultimo quiz</div>
<div class="a" style="left:1061px;top:758.5px;width:551px;height:1.5px;background:#e3e3e3"></div>

<!-- scrollbar -->
<div class="a" style="left:1643px;top:76px;width:7px;height:545px;border-radius:4px;background:#8b8b8b"></div>
</body></html>
